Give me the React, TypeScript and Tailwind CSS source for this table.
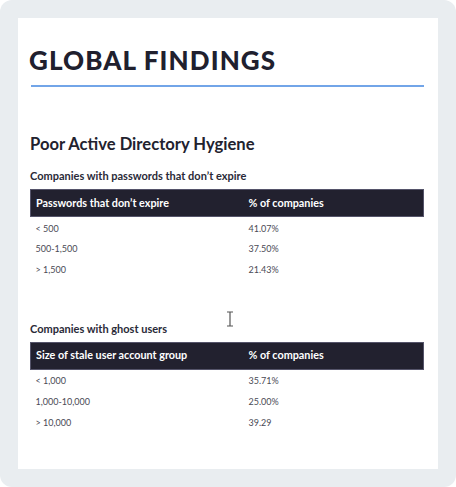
const tables = [
  {
    caption: 'Companies with passwords that don\u2019t expire',
    head: ['Passwords that don\u2019t expire', '% of companies'],
    rows: [
      ['< 500', '41.07%'],
      ['500-1,500', '37.50%'],
      ['> 1,500', '21.43%'],
    ],
  },
  {
    caption: 'Companies with ghost users',
    head: ['Size of stale user account group', '% of companies'],
    rows: [
      ['< 1,000', '35.71%'],
      ['1,000-10,000', '25.00%'],
      ['> 10,000', '39.29'],
    ],
  },
];

function FindingTable({ caption, head, rows }: { caption: string; head: string[]; rows: string[][] }) {
  return (
    <div>
      <p className="text-[11px] font-bold text-[#2a2a38] leading-[14px]">{caption}</p>
      <table className="mt-[6px] w-[394px] border-collapse">
        <thead>
          <tr className="bg-[#22212f] h-[27px] border border-[#55546a]">
            <th className="text-left text-white text-[10.8px] font-bold pl-[5px] w-[218px]">{head[0]}</th>
            <th className="text-left text-white text-[10.8px] font-bold">{head[1]}</th>
          </tr>
        </thead>
        <tbody>
          {rows.map((r) => (
            <tr key={r[0]} className="h-[21px]">
              <td className="text-[9px] text-[#4a4a55] pl-[5px] pt-[2px]">{r[0]}</td>
              <td className="text-[9px] text-[#4a4a55] pt-[2px]">{r[1]}</td>
            </tr>
          ))}
        </tbody>
      </table>
    </div>
  );
}

export default function App() {
  return (
    <div className="w-[456px] h-[487px] bg-[#e9edf0] rounded-[12px] p-[18px] font-['Lato',sans-serif]">
      <div className="relative bg-white h-[451px] pt-[27px] pl-[11px] pr-[14px]">
        <h1 className="text-[26px] font-black tracking-[1.1px] text-[#20202e] leading-[30px]">GLOBAL FINDINGS</h1>
        <div className="mt-[10px] ml-[2px] h-[2px] bg-[#72a5e8]" />

        <h2 className="mt-[47px] ml-[1px] text-[16.6px] font-bold text-[#22222e] leading-[20px]">Poor Active Directory Hygiene</h2>

        <div className="mt-[15px] ml-[1px]">
          <FindingTable {...tables[0]} />
        </div>
        <div className="mt-[42px] ml-[1px]">
          <FindingTable {...tables[1]} />
        </div>

        {/* text cursor */}
        <svg className="absolute left-[208px] top-[293px]" width="8" height="16" viewBox="0 0 8 16">
          <path d="M1 1h6M4 1v14M1 15h6" stroke="#555" strokeWidth="1.2" fill="none" />
        </svg>
      </div>
    </div>
  );
}
